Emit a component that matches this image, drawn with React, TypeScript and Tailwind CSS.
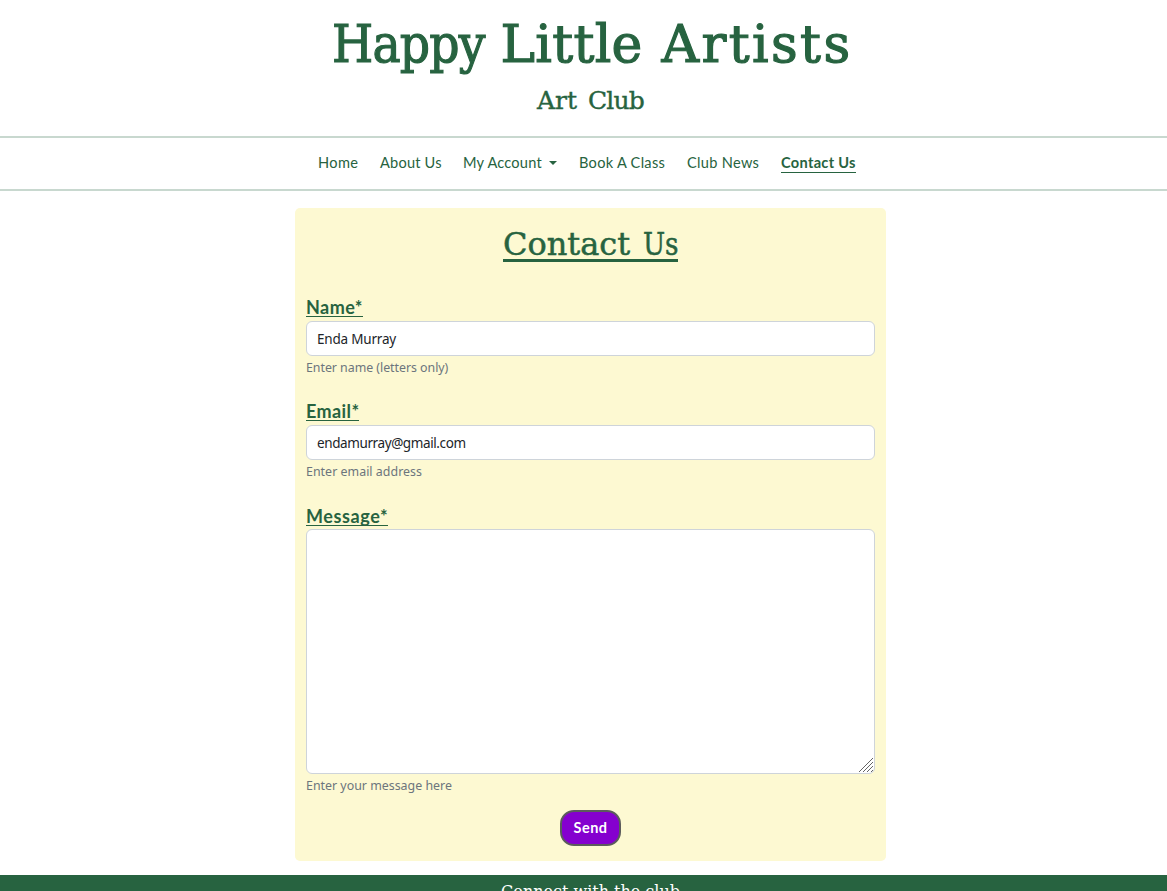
import React from "react";

const navLink = "whitespace-nowrap";
const display = "font-['DejaVu_Serif',serif]";
const label =
  "self-start border-b border-[#276340] font-['Lato',sans-serif] text-[18px] font-bold leading-[18px] h-[19px] whitespace-nowrap";
const hint =
  "font-['Noto_Sans',sans-serif] text-[12.4px] leading-[19px] text-[#6c757d] whitespace-nowrap";
const field =
  "block w-full rounded-[6px] border border-[#ced4da] bg-white px-[10px] font-['Noto_Sans',sans-serif] text-[13.5px] text-[#212529] outline-none";

export default function App() {
  return (
    <div className="flex h-[891px] w-full flex-col overflow-hidden bg-white text-[#276340]">
      <header className="flex h-[136px] shrink-0 flex-col items-center pl-[14px]">
        <h1
          className={`${display} mt-[13px] flex h-[62px] gap-[19px] text-[52px] leading-[62px] [-webkit-text-stroke:1.2px_#276340]`}
        >
          <span className="w-[150px] whitespace-nowrap">
            <span className="inline-block origin-left scale-x-[0.91] tracking-[-0.9px]">Happy</span>
          </span>
          <span className="w-[142px] whitespace-nowrap tracking-[0.3px]">Little</span>
          <span className="w-[188px] whitespace-nowrap tracking-[2.4px]">Artists</span>
        </h1>
        <h2
          className={`${display} mt-[9px] flex h-[34px] gap-[10px] text-[25px] leading-[34px] [-webkit-text-stroke:0.4px_#276340]`}
        >
          <span className="w-[41px] whitespace-nowrap">Art</span>
          <span className="w-[56px] whitespace-nowrap tracking-[-0.8px]">Club</span>
        </h2>
      </header>

      <nav className="flex h-[55px] shrink-0 items-center border-y-2 border-[#c8d8cf] pb-[2px] pl-[318px] font-['Lato',sans-serif] text-[14.6px] leading-[20px]">
        <a className={`${navLink} w-[62px] tracking-[0.35px]`}>Home</a>
        <a className={`${navLink} w-[83px] tracking-[0.2px]`}>About Us</a>
        <a className={`${navLink} flex w-[116px] items-center tracking-[0.2px]`}>
          <span className="w-[86px]">My Account</span>
          <svg width="8" height="4" viewBox="0 0 8 4" className="mt-[1px] fill-current">
            <path d="M0 0h8L4 4z" />
          </svg>
        </a>
        <a className={`${navLink} w-[108px] tracking-[0.28px]`}>Book A Class</a>
        <a className={`${navLink} w-[94px] tracking-[0.3px]`}>Club News</a>
        <a className={`${navLink} mt-[1px] h-[20px] w-[75px] border-b border-[#276340] font-bold tracking-[0.3px]`}>
          Contact Us
        </a>
      </nav>

      <main className="ml-[295px] mt-[17px] flex h-[653px] w-[591px] shrink-0 flex-col rounded-[5px] bg-[#fdf9d2] px-[11px]">
        <h2
          className={`${display} mt-[15px] flex h-[39px] gap-[12px] self-center border-b-[3px] border-[#276340] text-[32px] leading-[42px] [-webkit-text-stroke:0.5px_#276340]`}
        >
          <span className="w-[128px] whitespace-nowrap">Contact</span>
          <span className="w-[35px] whitespace-nowrap">
            <span className="inline-block origin-left scale-x-[0.82]">Us</span>
          </span>
        </h2>

        <label className={`${label} mt-[36px] w-[57px] tracking-[0.45px]`}>Name*</label>
        <input className={`${field} mt-[4px] h-[35px] tracking-[-0.2px]`} defaultValue="Enda Murray" />
        <p className={`${hint} mt-[2px] tracking-[-0.04px]`}>Enter name (letters only)</p>

        <label className={`${label} mt-[25px] w-[53px] tracking-[0.4px]`}>Email*</label>
        <input
          className={`${field} mt-[4px] h-[35px] tracking-[-0.4px]`}
          defaultValue="endamurray@gmail.com"
        />
        <p className={`${hint} mt-[2px] tracking-[0.03px]`}>Enter email address</p>

        <label className={`${label} mt-[26px] w-[82px] tracking-[0.6px]`}>Message*</label>
        <textarea className={`${field} mt-[3px] h-[245px] shrink-0 resize-none`} />
        <svg
          width="15"
          height="15"
          viewBox="0 0 15 15"
          className="-mt-[16px] mr-[1px] self-end stroke-[#666]"
        >
          <path d="M0 14L14 0M4 14L14 4M8 14l6-6M12 14l2-2" />
        </svg>
        <p className={`${hint} mt-[3px]`}>Enter your message here</p>
        <button className="mt-[15px] h-[36px] w-[61px] self-center rounded-[14px] border-2 border-[#5c5c5c] bg-[#8500cf] font-['Lato',sans-serif] text-[14.5px] font-bold tracking-[0.5px] text-white">
          Send
        </button>
      </main>

      <footer className="mt-[14px] flex h-[80px] shrink-0 justify-center bg-[#276340] pl-[14px] text-white">
        <h3 className={`${display} mt-[7px] whitespace-nowrap text-[16px] leading-[20px]`}>
          Connect with the club
        </h3>
      </footer>
    </div>
  );
}
